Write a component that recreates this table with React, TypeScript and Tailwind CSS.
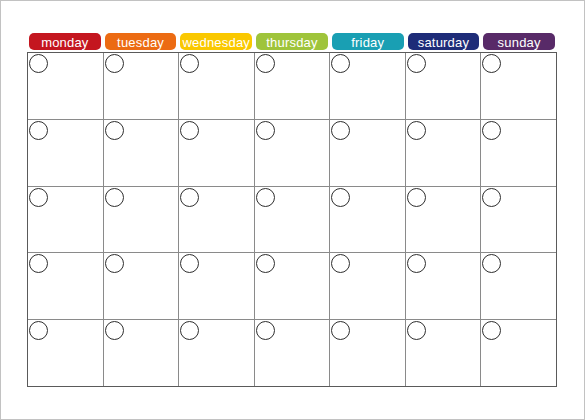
import React from 'react';

const days = [
  { name: 'monday', color: 'bg-[#c4161f]' },
  { name: 'tuesday', color: 'bg-[#ec6b13]' },
  { name: 'wednesday', color: 'bg-[#fac800]' },
  { name: 'thursday', color: 'bg-[#9fc43b]' },
  { name: 'friday', color: 'bg-[#199fb3]' },
  { name: 'saturday', color: 'bg-[#1e2c78]' },
  { name: 'sunday', color: 'bg-[#582a68]' },
];

const cells = Array.from({ length: 35 }, (_, i) => i);

export default function App() {
  return (
    <div
      className="w-[585px] h-[420px] bg-white border border-[#c2c2c2] pt-[32px] pl-[26px]"
      style={{ fontFamily: '"Liberation Sans", Arial, sans-serif' }}
    >
      <div className="w-[530px]">
        {/* day tabs */}
        <div className="grid grid-cols-7 h-[17px]">
          {days.map((d) => (
            <div key={d.name} className="px-[2px]">
              <div
                className={`${d.color} h-[17px] rounded-[5px] flex items-center justify-center text-white text-[13px] tracking-[0.2px] leading-none pt-[1px]`}
              >
                {d.name}
              </div>
            </div>
          ))}
        </div>

        {/* calendar grid */}
        <div className="mt-[2px] h-[335px] border border-[#5a5a5a] bg-[#8a8a8a] grid grid-cols-7 grid-rows-5 gap-px">
          {cells.map((i) => (
            <div key={i} className="bg-white p-[1px]">
              <div className="w-[19px] h-[19px] rounded-full border border-[#2e2e2e]" />
            </div>
          ))}
        </div>
      </div>
    </div>
  );
}
